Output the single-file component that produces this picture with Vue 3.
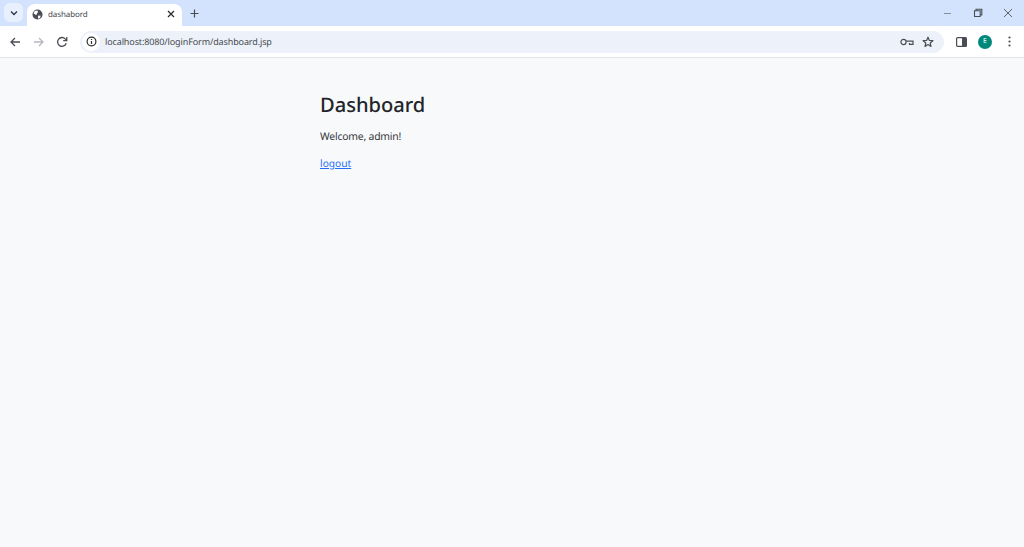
<script setup>
const title = 'dashabord'
const url = 'localhost:8080/loginForm/dashboard.jsp'
</script>

<template>
  <div class="window">
    <header class="tabstrip">
      <div class="tab-search">
        <svg width="10" height="10" viewBox="0 0 10 10"><path d="M2 3.5 5 6.5 8 3.5" fill="none" stroke="#2f3a4a" stroke-width="1.4"/></svg>
      </div>
      <div class="tab">
        <svg class="globe" width="11" height="11" viewBox="0 0 12 12">
          <circle cx="6" cy="6" r="5.5" fill="#4a4e54"/>
          <path d="M3 2.2 5.8 1.6 6.8 3.2 5.4 4.6 5.6 6 3.8 6.2 1.6 4.6ZM7 7 9.6 7.4 8.6 9.8 6.8 10.6 6.4 8.4Z" fill="#fff"/>
        </svg>
        <span class="tab-title">{{ title }}</span>
        <svg class="tab-close" width="8" height="8" viewBox="0 0 8 8"><path d="M1 1 7 7M7 1 1 7" stroke="#2b2d30" stroke-width="1.3"/></svg>
      </div>
      <svg class="new-tab" width="9" height="9" viewBox="0 0 9 9"><path d="M4.5 0.5V8.5M0.5 4.5H8.5" stroke="#4a4e54" stroke-width="1.2"/></svg>
      <div class="win-controls">
        <svg width="10" height="10" viewBox="0 0 10 10"><path d="M1 5.5H8" stroke="#8a8f98" stroke-width="1"/></svg>
        <svg width="10" height="10" viewBox="0 0 10 10"><path d="M1.5 2.8H7.2V8.5H1.5ZM3 2.5V1.2H8.8V7H7.4" fill="none" stroke="#4a4e54" stroke-width="1.1"/></svg>
        <svg width="10" height="10" viewBox="0 0 10 10"><path d="M1 1 9 9M9 1 1 9" stroke="#5f6368" stroke-width="1"/></svg>
      </div>
    </header>

    <nav class="toolbar">
      <div class="nav-buttons">
        <svg width="12" height="12" viewBox="0 0 12 12"><path d="M11 6H2M6 2 2 6 6 10" fill="none" stroke="#4a4e54" stroke-width="1.3"/></svg>
        <svg width="12" height="12" viewBox="0 0 12 12"><path d="M1 6H10M6 2 10 6 6 10" fill="none" stroke="#b4b8bd" stroke-width="1.3"/></svg>
        <svg width="12" height="12" viewBox="0 0 12 12"><path d="M10.2 7.2A4.4 4.4 0 1 1 9.2 2.9L10.6 4.3M10.8 1V4.6H7.2" fill="none" stroke="#4a4e54" stroke-width="1.3"/></svg>
      </div>
      <div class="omnibox">
        <span class="site-info">
          <svg width="11" height="11" viewBox="0 0 12 12"><circle cx="6" cy="6" r="4.8" fill="none" stroke="#2b2d30" stroke-width="1.3"/><path d="M6 5.4V8.8M6 3.2V4.4" stroke="#2b2d30" stroke-width="1.3"/></svg>
        </span>
        <span class="url">{{ url }}</span>
        <svg class="key" width="14" height="8" viewBox="0 0 14 8"><circle cx="3.5" cy="4" r="2.6" fill="none" stroke="#4a4e54" stroke-width="1.2"/><path d="M6.2 3.2H13V6.4H9.5V5" fill="none" stroke="#4a4e54" stroke-width="1.2"/></svg>
        <svg class="star" width="12" height="12" viewBox="0 0 12 12"><path d="M6 1.2 7.4 4.4 10.9 4.7 8.2 7 9 10.5 6 8.6 3 10.5 3.8 7 1.1 4.7 4.6 4.4Z" fill="none" stroke="#4a4e54" stroke-width="1.2" stroke-linejoin="round"/></svg>
      </div>
      <svg class="side" width="11" height="10" viewBox="0 0 11 10"><rect x="0.6" y="0.6" width="9.8" height="8.8" rx="1" fill="none" stroke="#4a4e54" stroke-width="1.2"/><rect x="6" y="0.6" width="4.4" height="8.8" fill="#4a4e54"/></svg>
      <span class="avatar">E</span>
      <svg class="menu" width="3" height="11" viewBox="0 0 3 11"><circle cx="1.5" cy="1.5" r="1.1" fill="#4a4e54"/><circle cx="1.5" cy="5.5" r="1.1" fill="#4a4e54"/><circle cx="1.5" cy="9.5" r="1.1" fill="#4a4e54"/></svg>
    </nav>

    <main class="page">
      <h1>Dashboard</h1>
      <p>Welcome, admin!</p>
      <a href="#">logout</a>
    </main>
  </div>
</template>

<style>
html, body { margin: 0; background: #f8f9fa; }
</style>

<style scoped>
.window { width: 1024px; height: 547px; display: flex; flex-direction: column; overflow: hidden; font-family: "Noto Sans", "Open Sans", sans-serif; text-rendering: geometricPrecision; }
.tabstrip { height: 26px; flex: none; background: #d3e3fd; display: flex; align-items: center; }
.tab-search { width: 19px; height: 19px; margin: 0 0 1px 4px; border-radius: 6px; background: #e9f0fd; display: flex; align-items: center; justify-content: center; }
.tab { width: 155px; height: 22px; margin-left: 4px; background: #fff; border-radius: 8px 8px 0 0; display: flex; align-items: center; box-sizing: border-box; padding: 0 7px 2px 5px; align-self: flex-end; }
.globe { flex: none; }
.tab-title { font-size: 8px; letter-spacing: -0.1px; color: #45494f; margin-left: 5px; flex: 1; }
.tab-close { flex: none; }
.new-tab { margin: 0 0 0 8px; }
.win-controls { margin-left: auto; display: flex; gap: 20px; padding-right: 11px; align-items: center; }
.toolbar { height: 31px; flex: none; background: #fff; display: flex; align-items: center; border-bottom: 1px solid #e3e5e8; }
.nav-buttons { display: flex; gap: 11.5px; margin-left: 9px; align-items: center; }
.omnibox { width: 864px; height: 22px; margin-left: 12px; background: #edf2fa; border-radius: 11px; display: flex; align-items: center; }
.site-info { width: 18px; height: 18px; margin-left: 2px; background: #fff; border-radius: 50%; display: flex; align-items: center; justify-content: center; }
.url { font-size: 9px; letter-spacing: -0.12px; color: #45494f; margin-left: 5px; flex: 1; }
.key { margin-right: 8px; }
.star { margin-right: 10px; }
.side { margin-left: 12px; }
.avatar { width: 14px; height: 14px; margin-left: 11px; border-radius: 50%; background: #00897b; color: #fff; font-size: 7px; display: flex; align-items: center; justify-content: center; }
.menu { margin-left: 16px; }
.page { flex: 1; background: #f8f9fa; padding: 32px 0 0 320px; color: #212529; }
h1 { margin: 0; font-size: 20.1px; font-weight: 500; line-height: 30px; }
p { margin: 9px 0 0; font-size: 10.4px; letter-spacing: -0.2px; line-height: 17px; color: #33383d; }
a { display: inline-block; margin-top: 9px; font-size: 10.2px; line-height: 17px; color: #1f6ffb; text-decoration: underline; }
</style>
